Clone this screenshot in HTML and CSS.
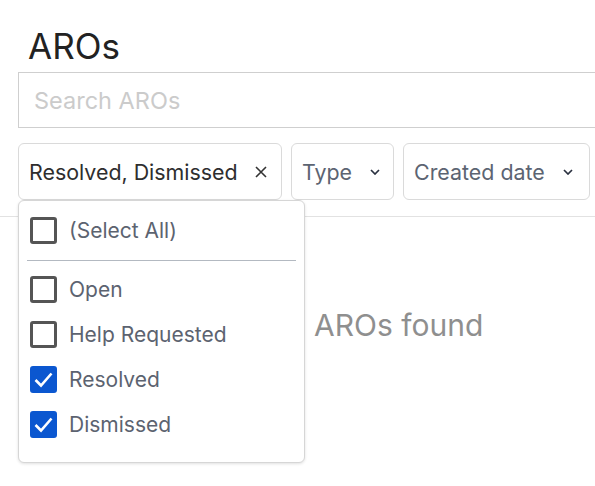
FILE: index.html
```html
<!DOCTYPE html>
<html>
<head>
<meta charset="utf-8">
<link rel="stylesheet" href="styles.css">
</head>
<body>
<div class="page">
  <h1 class="title">AROs</h1>
  <input class="search" type="text" placeholder="Search AROs">
  <div class="filters">
    <div class="filter filter-status">
      <span class="filter-value">Resolved, Dismissed</span>
      <svg class="icon-x" width="14" height="14" viewBox="0 0 14 14"><path d="M2 2L12 12M12 2L2 12" stroke="#333" stroke-width="1.6" fill="none"/></svg>
    </div>
    <div class="filter filter-type">
      <span class="filter-label">Type</span>
      <svg class="icon-chev" width="10" height="6" viewBox="0 0 10 6"><path d="M1 1L5 5L9 1" stroke="#2a3140" stroke-width="1.7" fill="none"/></svg>
    </div>
    <div class="filter filter-date">
      <span class="filter-label">Created date</span>
      <svg class="icon-chev" width="10" height="6" viewBox="0 0 10 6"><path d="M1 1L5 5L9 1" stroke="#2a3140" stroke-width="1.7" fill="none"/></svg>
    </div>
  </div>
  <div class="content">
    <p class="empty">No AROs found</p>
  </div>

  <div class="dropdown">
    <label class="option">
      <span class="box"></span>
      <span class="option-text">(Select All)</span>
    </label>
    <div class="sep"></div>
    <label class="option">
      <span class="box"></span>
      <span class="option-text">Open</span>
    </label>
    <label class="option">
      <span class="box"></span>
      <span class="option-text">Help Requested</span>
    </label>
    <label class="option">
      <span class="box checked"><svg width="27" height="27" viewBox="0 0 27 27"><path d="M5.5 14L11 19.5L21.5 7.5" stroke="#fff" stroke-width="2.6" fill="none"/></svg></span>
      <span class="option-text">Resolved</span>
    </label>
    <label class="option">
      <span class="box checked"><svg width="27" height="27" viewBox="0 0 27 27"><path d="M5.5 14L11 19.5L21.5 7.5" stroke="#fff" stroke-width="2.6" fill="none"/></svg></span>
      <span class="option-text">Dismissed</span>
    </label>
  </div>
</div>
</body>
</html>
```
FILE: styles.css
```css
html, body {
  margin: 0;
  padding: 0;
  background: #fff;
  font-family: "Inter", "Liberation Sans", sans-serif;
}

.page {
  position: relative;
  overflow: hidden;
  height: 486px;
  padding-top: 26px;
  box-sizing: border-box;
}

.title {
  margin: 0 0 0 28px;
  font-size: 35px;
  font-weight: 400;
  line-height: 40px;
  color: #222;
}

.search {
  display: block;
  box-sizing: border-box;
  margin: 6px 0 0 18px;
  width: 712px;
  height: 56px;
  border: 1px solid #cfcfcf;
  border-radius: 0;
  padding: 0 15px;
  font-family: inherit;
  font-size: 23.5px;
  color: #333;
  outline: none;
}
.search::placeholder {
  color: #cbcbcb;
}

.filters {
  display: flex;
  gap: 9px;
  margin: 15px 0 0 18px;
}

.filter {
  box-sizing: border-box;
  height: 57px;
  display: flex;
  align-items: center;
  justify-content: space-between;
  border: 1px solid #dadada;
  border-radius: 6px;
  padding: 0 13px 0 10px;
  font-size: 21.4px;
  flex: none;
}
.filter-status { width: 264px; }
.filter-type { width: 103px; }
.filter-date { width: 187px; padding-right: 16px; }

.filter-value { color: #2e2e2e; }
.filter-label { color: #5c6472; }

.icon-x { margin-top: 1px; }

.content {
  margin-top: 16px;
  border-top: 1px solid #e2e2e2;
  padding-top: 90px;
  padding-left: 265px;
}

.empty {
  margin: 0;
  white-space: nowrap;
  font-size: 30px;
  line-height: 36px;
  color: #8f8f8f;
}

.dropdown {
  position: absolute;
  left: 18px;
  top: 200px;
  box-sizing: border-box;
  width: 287px;
  height: 263px;
  background: #fff;
  border: 1px solid #d6d6d6;
  border-radius: 6px;
  box-shadow: 0 1px 3px rgba(0, 0, 0, 0.12);
  padding: 16px 8px 0 8px;
}

.option {
  display: flex;
  align-items: center;
  gap: 12px;
  height: 27px;
  padding-left: 3px;
  margin-bottom: 18px;
  font-size: 21px;
  color: #5c6370;
}

.sep {
  height: 1px;
  background: #b3b9c1;
  margin: -2px 0 15px 0;
}

.box {
  position: relative;
  box-sizing: border-box;
  width: 27px;
  height: 27px;
  border: 3px solid #555;
  border-radius: 3px;
  flex: none;
}
.box svg {
  position: absolute;
  left: -3px;
  top: -3px;
}
.box.checked {
  background: #0b57d0;
  border-color: #0b57d0;
}
```
